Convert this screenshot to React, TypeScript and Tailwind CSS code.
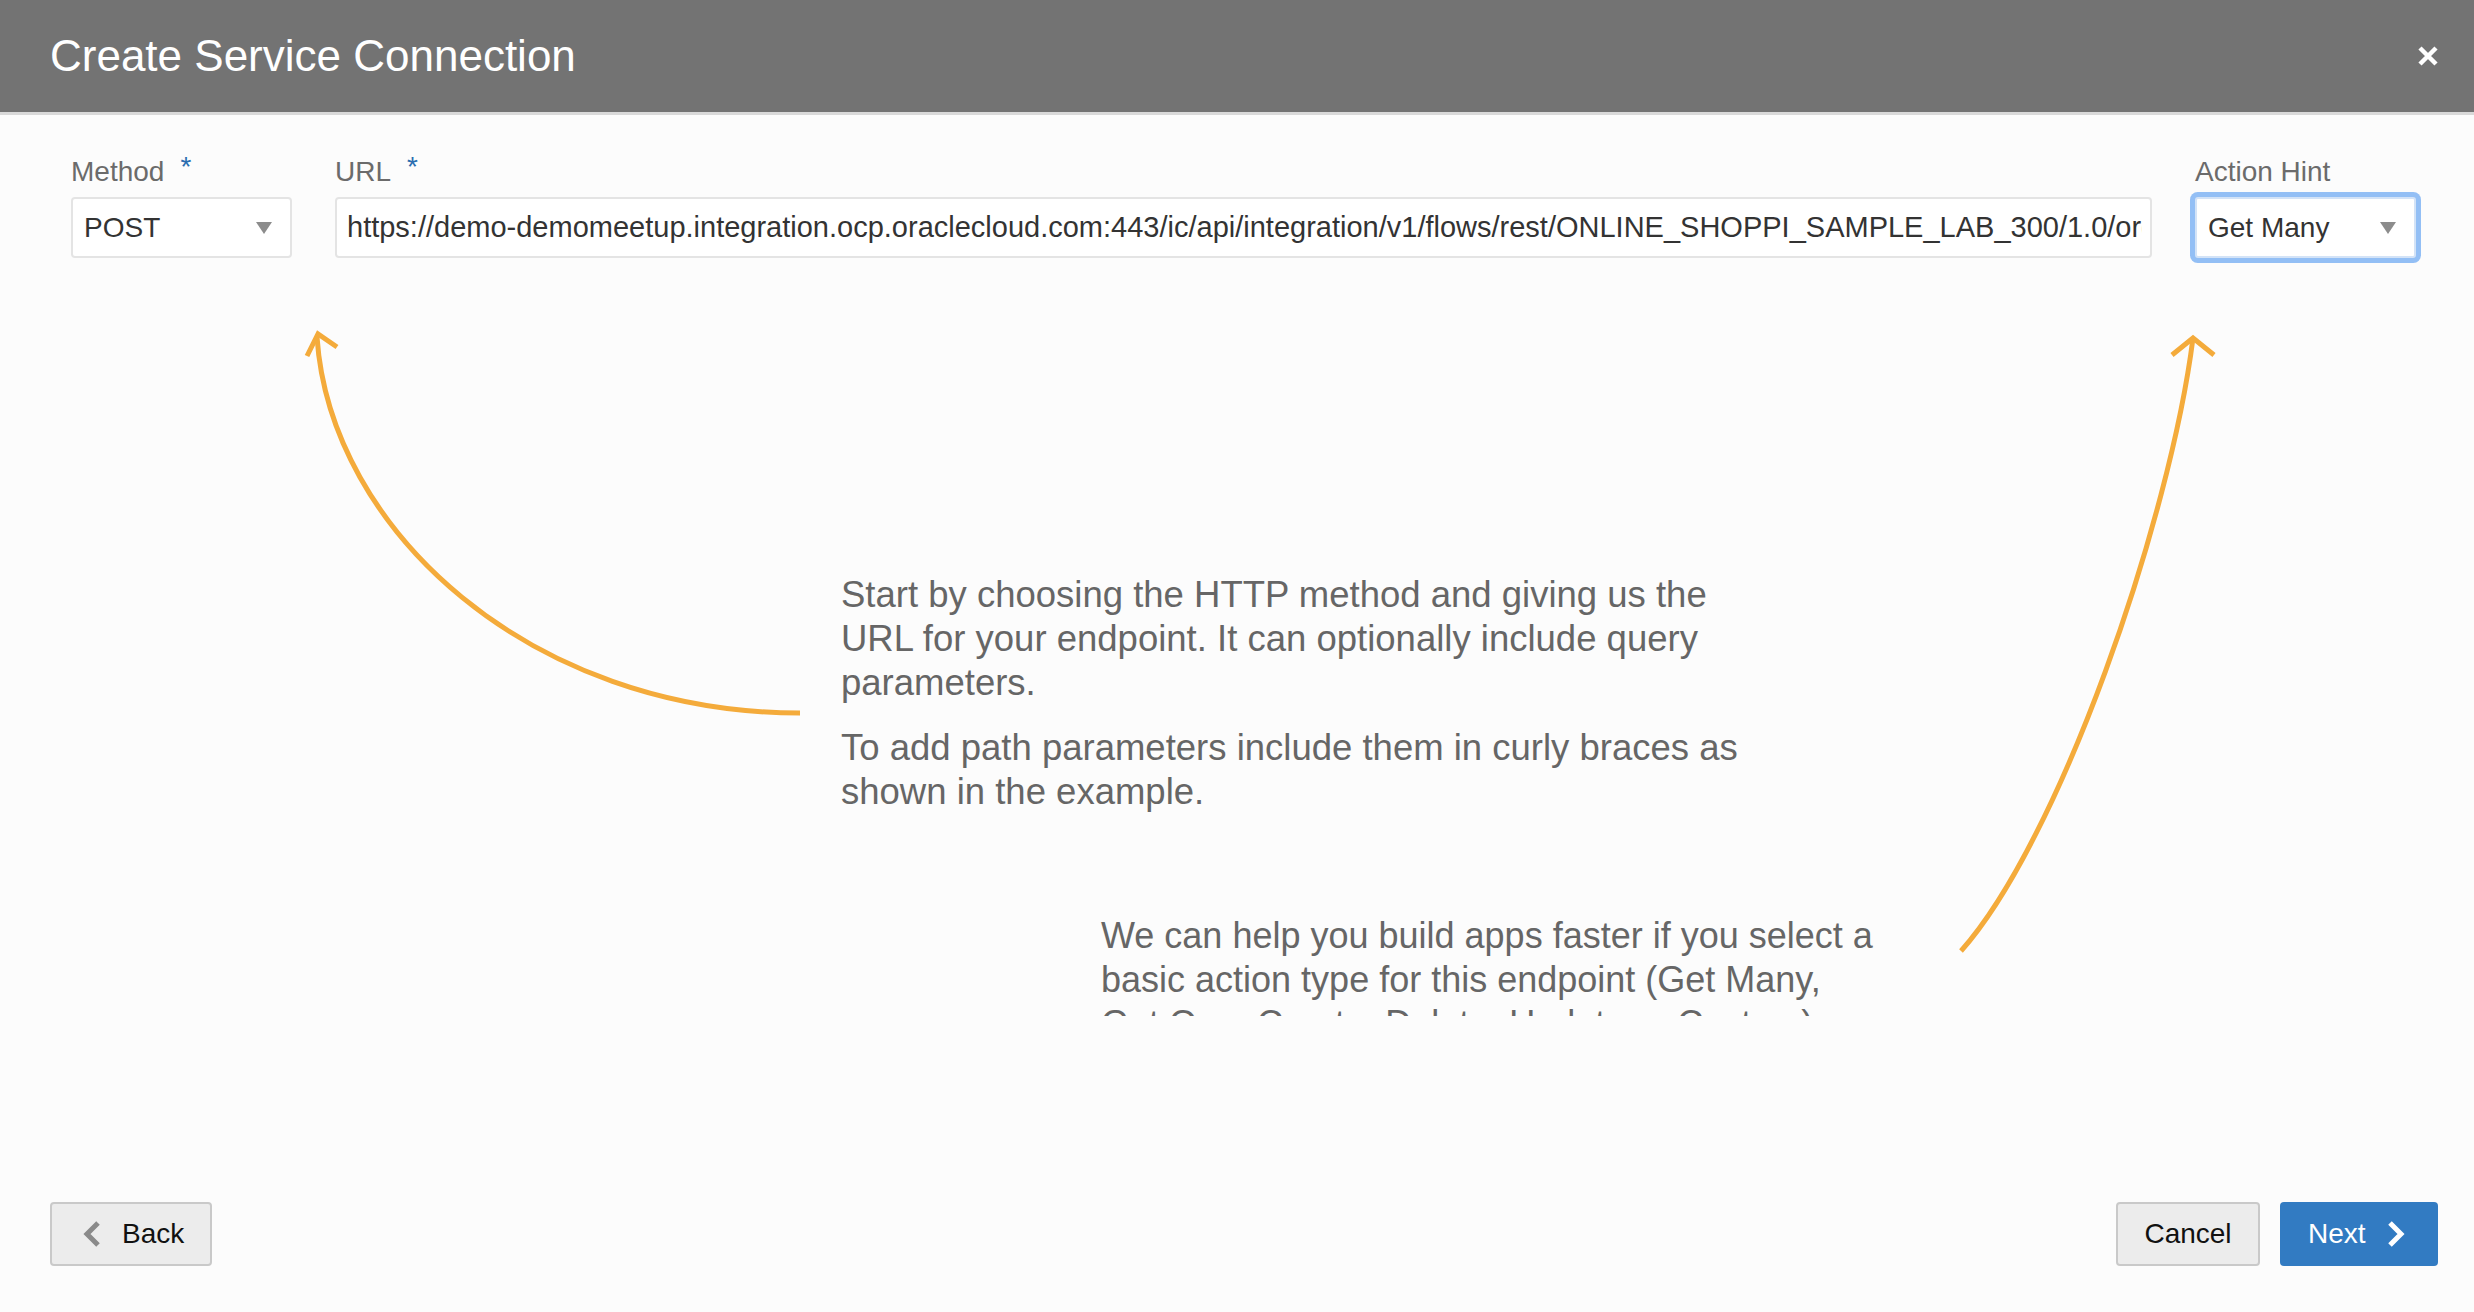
const font = { fontFamily: '"Liberation Sans", Arial, sans-serif' };

const Caret = () => (
  <svg width="16" height="12" viewBox="0 0 16 12" className="shrink-0">
    <path d="M0 0h16L8 12z" fill="#8c8c8c" />
  </svg>
);

const FieldLabel = ({ text, required }: { text: string; required?: boolean }) => (
  <div className="h-[34px] mb-[8px] text-[28px] leading-[34px] text-[#6b6b6b] whitespace-nowrap">
    {text}
    {required && <span className="relative -top-[5px] ml-[16px] text-[#2a6db0]">*</span>}
  </div>
);

const Arrows = () => (
  <svg
    className="absolute inset-0 pointer-events-none"
    width="2474"
    height="1312"
    viewBox="0 0 2474 1312"
    fill="none"
    stroke="#f4ab3b"
    strokeWidth="5"
  >
    <path d="M800 713 C530 713 330 530 317 337" />
    <path d="M307 356 L318 334 L337 347" />
    <path d="M1961 951 C2060 840 2170 520 2193 338" />
    <path d="M2172 355 L2193 338 L2214 355" />
  </svg>
);

export default function App() {
  return (
    <div className="relative w-full h-[1312px] bg-[#fcfcfc] flex flex-col" style={font}>
      <div className="h-[115px] shrink-0 bg-[#737373] border-b-[3px] border-[#d9d9d9] flex items-center justify-between pl-[50px] pr-[36px]">
        <h1 className="text-[44px] text-white font-normal">Create Service Connection</h1>
        <svg width="20" height="20" viewBox="0 0 20 20" stroke="white" strokeWidth="4.5">
          <path d="M2 2L18 18M18 2L2 18" />
        </svg>
      </div>

      <div className="h-[901px] shrink-0 overflow-hidden">
        <div className="flex gap-[43px] pt-[40px] pl-[71px] pr-[58px]">
          <div className="w-[221px] shrink-0">
            <FieldLabel text="Method" required />
            <div className="h-[61px] bg-white border-2 border-[#e4e4e4] rounded-[4px] flex items-center justify-between pl-[11px] pr-[18px] text-[28px] text-[#333]">
              <span>POST</span>
              <Caret />
            </div>
          </div>
          <div className="flex-1 min-w-0">
            <FieldLabel text="URL" required />
            <div className="h-[61px] bg-white border-2 border-[#e4e4e4] rounded-[4px] flex items-center pl-[10px] pr-[8px] text-[29px] text-[#333] overflow-hidden whitespace-nowrap">
              <span className="overflow-hidden">
                https://demo-demomeetup.integration.ocp.oraclecloud.com:443/ic/api/integration/v1/flows/rest/ONLINE_SHOPPI_SAMPLE_LAB_300/1.0/orders
              </span>
            </div>
          </div>
          <div className="w-[221px] shrink-0">
            <FieldLabel text="Action Hint" />
            <div className="h-[61px] bg-white border-2 border-[#d3e3f7] rounded-[3px] shadow-[0_0_0_5px_#93bff5] flex items-center justify-between pl-[11px] pr-[18px] text-[28px] text-[#333]">
              <span>Get Many</span>
              <Caret />
            </div>
          </div>
        </div>

        <div className="mt-[315px] pl-[841px] text-[36.5px] leading-[44px] text-[#666]">
          <p className="w-[910px]">
            Start by choosing the HTTP method and giving us the URL for your endpoint. It can optionally include query
            parameters.
          </p>
          <p className="w-[910px] mt-[21px]">
            To add path parameters include them in curly braces as shown in the example.
          </p>
        </div>

        <div className="mt-[100px] pl-[1101px] text-[36px] leading-[44px] text-[#666]">
          <p className="w-[780px]">
            We can help you build apps faster if you select a basic action type for this endpoint (Get Many, Get One,
            Create, Delete, Update or Custom).
          </p>
        </div>
      </div>

      <div className="flex-1 flex items-end justify-between pl-[50px] pr-[36px] pb-[46px]">
        <button className="h-[64px] w-[162px] bg-[#ececec] border-2 border-[#c9c9c9] rounded-[4px] flex items-center pl-[30px] gap-[20px] text-[28px] text-[#111]">
          <svg width="20" height="28" viewBox="0 0 20 28" fill="none" stroke="#8a8a8a" strokeWidth="5">
            <path d="M16 3L5 14L16 25" />
          </svg>
          <span>Back</span>
        </button>
        <div className="flex gap-[20px]">
          <button className="h-[64px] w-[144px] bg-[#ececec] border-2 border-[#c9c9c9] rounded-[4px] flex items-center justify-center text-[28px] text-[#111]">
            Cancel
          </button>
          <button className="h-[64px] w-[158px] bg-[#327bc2] rounded-[4px] flex items-center pl-[28px] gap-[20px] text-[28px] text-white">
            <span>Next</span>
            <svg width="20" height="28" viewBox="0 0 20 28" fill="none" stroke="white" strokeWidth="5">
              <path d="M4 3L15 14L4 25" />
            </svg>
          </button>
        </div>
      </div>

      <Arrows />
    </div>
  );
}
